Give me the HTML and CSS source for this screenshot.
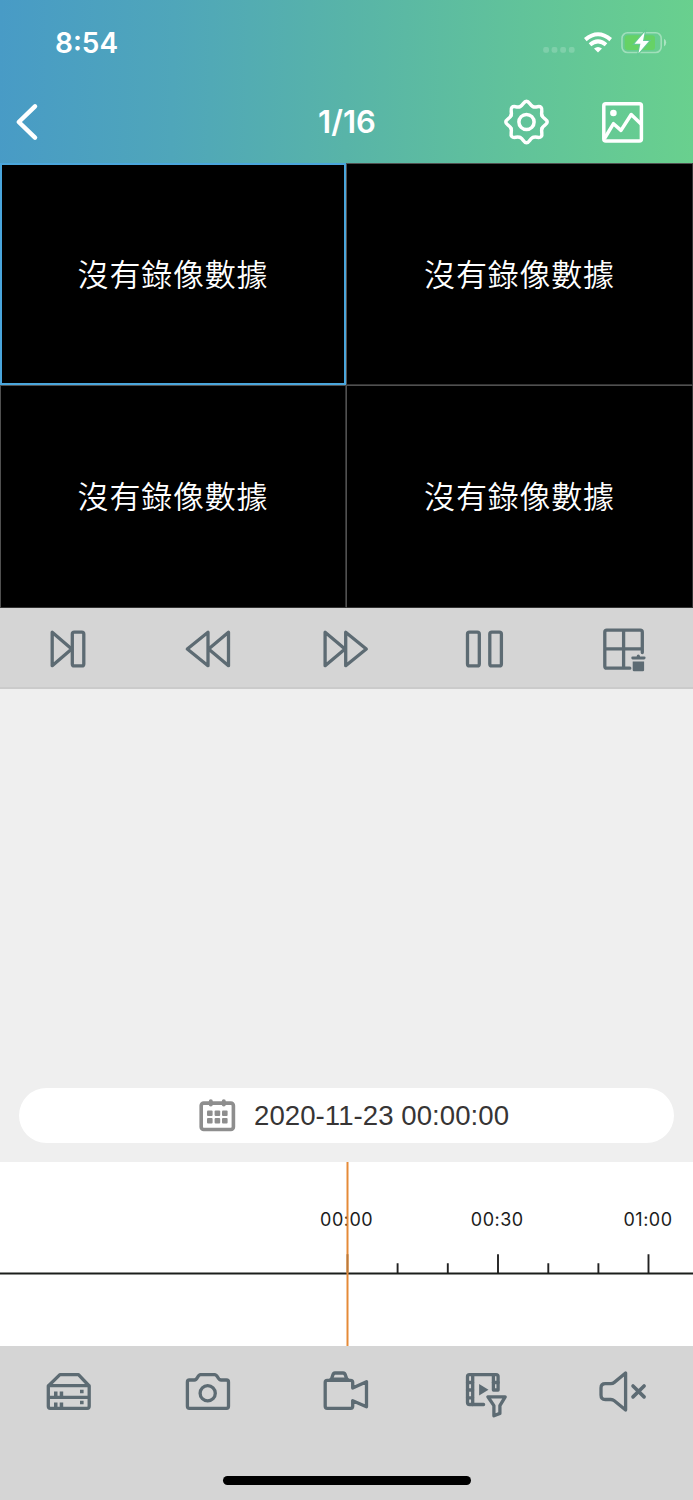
FILE: index.html
```html
<!DOCTYPE html>
<html lang="zh-Hant">
<head>
<meta charset="utf-8">
<title>1/16</title>
<link rel="stylesheet" href="styles.css">
</head>
<body>
<header class="header">
  <div class="status">
    <span class="clock">8:54</span>
    <svg class="status-icons" width="126" height="30" viewBox="541 28 126 30">
      <g fill="#fff" opacity=".18"><rect x="543.2" y="47" width="5.8" height="5.8" rx="2"/><rect x="551.6" y="47" width="5.8" height="5.8" rx="2"/><rect x="560.2" y="47" width="5.8" height="5.8" rx="2"/><rect x="568.8" y="47" width="5.8" height="5.8" rx="2"/></g>
      <g fill="none" stroke="#fff" stroke-width="4"><path d="M585.3 39.6Q598 28.9 610.7 39.6"/><path d="M590 44.7Q598 38.1 606 44.7"/></g>
      <path d="M594 48.6Q598 45.3 602 48.6L598 52.6Z" fill="#fff"/>
      <rect x="622" y="32.7" width="39.2" height="19.8" rx="5.5" fill="none" stroke="#fff" stroke-opacity=".38" stroke-width="1.6"/>
      <path d="M664 38.8Q666.2 40 666.2 42.6T664 46.4Z" fill="#fff" opacity=".45"/>
      <rect x="624.7" y="35.3" width="30.3" height="14.8" rx="3" fill="#66d266"/>
      <path d="M644.7 32L634.5 43.8H640.4L638.5 53.2L649 41H643Z" fill="#fff" stroke="#65c994" stroke-width="2.2" paint-order="stroke"/>
    </svg>
  </div>
  <nav class="nav">
    <svg width="30" height="46" viewBox="12 99 30 46"><path d="M35 106.4L18.8 122L35 137.6" fill="none" stroke="#fff" stroke-width="4.5" stroke-linecap="round" stroke-linejoin="round"/></svg>
    <h1 class="title">1/16</h1>
    <div class="actions">
      <svg width="50" height="50" viewBox="-24.5 -25 50 50" fill="none" stroke="#fff" stroke-width="3.5" stroke-linecap="round">
        <defs><path id="tooth" d="M-6.4 -15.5C-3 -16.9 -3 -20.7 0 -20.7S3 -16.9 6.4 -15.5"/></defs>
        <use href="#tooth"/><use href="#tooth" transform="rotate(45)"/><use href="#tooth" transform="rotate(90)"/><use href="#tooth" transform="rotate(135)"/><use href="#tooth" transform="rotate(180)"/><use href="#tooth" transform="rotate(225)"/><use href="#tooth" transform="rotate(270)"/><use href="#tooth" transform="rotate(315)"/>
        <circle r="7.6"/>
      </svg>
      <svg width="50" height="50" viewBox="598 97 50 50" fill="none" stroke="#fff" stroke-width="3.5" stroke-linejoin="round"><rect x="603.8" y="103.7" width="37.6" height="37.4" rx="2"/><path d="M604.5 138.5L613.5 123.7L621 130.4L631.2 114.5L641 124"/><circle cx="613.4" cy="113" r="3.3" fill="#fff" stroke="none"/></svg>
    </div>
  </nav>
</header>

<main class="grid">
  <div class="cell active">沒有錄像數據</div>
  <div class="cell">沒有錄像數據</div>
  <div class="cell">沒有錄像數據</div>
  <div class="cell">沒有錄像數據</div>
</main>

<div class="bar controls">
  <svg class="icon" viewBox="44.3 621.5 50 54"><path d="M52.5 631.8V665.2L72 648.5Z"/><rect x="72.6" y="631.6" width="11.5" height="33.8" rx="2"/></svg>
  <svg class="icon" viewBox="182.9 621.5 50 54"><path d="M207.9 631.8V665.2L187.2 648.5ZM228.4 631.8V665.2L208.5 648.5Z"/></svg>
  <svg class="icon" viewBox="321.5 621.5 50 54"><path d="M325.6 631.8V665.2L345.5 648.5ZM346.2 631.8V665.2L366.8 648.5Z"/></svg>
  <svg class="icon" viewBox="460.1 621.5 50 54"><rect x="467.6" y="631.6" width="11.8" height="33.8" rx="2"/><rect x="489.9" y="631.6" width="11.6" height="33.8" rx="2"/></svg>
  <svg class="icon" viewBox="598.7 621.5 50 54"><path d="M642 652V631.6Q642 629.6 640 629.6H606.5Q604.5 629.6 604.5 631.6V665.7Q604.5 667.7 606.5 667.7H629.5M604.5 648.4H642M623.3 629.6V667.7"/><path class="solid" d="M631 657.3Q631 656 632.3 656H636.3Q636.5 654 638 654T639.8 656H644Q645.3 656 645.3 657.3T644 658.9H632.3Q631 658.9 631 657.3ZM632.4 661H643.8V669.5Q643.8 670.8 642.5 670.8H633.7Q632.4 670.8 632.4 669.5Z"/></svg>
</div>

<section class="picker">
  <div class="pill">
    <svg width="38" height="34" viewBox="198 1098.5 38 34"><rect x="201.2" y="1102.6" width="32.2" height="26.4" rx="2.5" fill="none" stroke="#8e8e8e" stroke-width="3.6"/><path d="M210.8 1100.8V1104M223.8 1100.8V1104" stroke="#8e8e8e" stroke-width="4" stroke-linecap="round"/><g fill="#8e8e8e"><rect x="207" y="1110" width="5.6" height="5.6" rx="1"/><rect x="214.6" y="1110" width="5.6" height="5.6" rx="1"/><rect x="222" y="1110" width="5.6" height="5.6" rx="1"/><rect x="207" y="1117.4" width="5.6" height="5.6" rx="1"/><rect x="214.6" y="1117.4" width="5.6" height="5.6" rx="1"/><rect x="222" y="1117.4" width="5.6" height="5.6" rx="1"/></g></svg>
    <span class="date">2020-11-23 00:00:00</span>
  </div>
</section>

<svg class="timeline" viewBox="0 1162 693 184">
  <g class="hours"><text x="346.6" y="1225.8">00:00</text><text x="497.3" y="1225.8">00:30</text><text x="648" y="1225.8">01:00</text></g>
  <path d="M397.6 1263.3V1273M447.8 1263.3V1273M498 1254.2V1273M548.3 1263.3V1273M598.4 1263.3V1273M648.5 1254.2V1273" stroke="#222" stroke-width="1.9"/>
  <path d="M0 1273.5H693" stroke="#1b1e1b" stroke-width="2"/>
  <path d="M347.5 1162V1346" stroke="#e58a38" stroke-width="2"/>
  <path d="M347.5 1254.2V1272.5" stroke="#bd7a3a" stroke-width="2"/>
</svg>

<footer class="bar footer">
  <svg class="icon" viewBox="44.3 1366 50 54"><path d="M48.6 1386L60.2 1374.6H78.8L89.5 1386V1406.3Q89.5 1408.3 87.5 1408.3H50.6Q48.6 1408.3 48.6 1406.3ZM48.6 1385.7H89.5M48.6 1397.3H89.5"/><path class="solid" d="M54.3 1391.5h3.5v4.5h-3.5zM60 1391.5h3.5v4.5h-3.5zM54.3 1402.4h3.5v4.5h-3.5zM60 1402.4h3.5v4.5h-3.5zM80.3 1389.7h3.6v3.6h-3.6zM80.3 1400.7h3.6v3.6h-3.6z"/></svg>
  <svg class="icon" viewBox="182.9 1366 50 54"><path d="M189.3 1380H194.3C198 1380 197 1374.6 200.5 1374.6H214.5C218 1374.6 217.3 1380 221 1380H226.4Q228.4 1380 228.4 1382V1406.3Q228.4 1408.3 226.4 1408.3H189.3Q187.3 1408.3 187.3 1406.3V1382Q187.3 1380 189.3 1380Z"/><circle cx="207.6" cy="1393.2" r="7.6"/></svg>
  <svg class="icon" viewBox="321.5 1366 50 54"><path d="M327.7 1380.3H351Q353.2 1380.3 353.2 1382.3V1388L367 1381.8V1406.8L353.2 1400.7V1406.3Q353.2 1408.3 351.2 1408.3H327.7Q325.7 1408.3 325.7 1406.3V1382.3Q325.7 1380.3 327.7 1380.3ZM330.5 1380C334 1378.5 332 1373 335.5 1373H343.5C347.5 1373 345 1378.5 349 1380M333 1379.2H346.5"/></svg>
  <svg class="icon" viewBox="460.1 1366 50 54"><path d="M483.7 1404.5H469.6Q467.6 1404.5 467.6 1402.5V1376.6Q467.6 1374.6 469.6 1374.6H496.2Q498.2 1374.6 498.2 1376.6V1390H493.5V1374.6"/><path d="M472.8 1374.6V1404.5M467.6 1382.5H473M467.6 1390H473M467.6 1397.8H473M493.5 1382.5H498.2"/><path class="solid" d="M479.2 1384L488.6 1389.8L479.2 1395.4Z"/><path d="M488 1396.8H505.3L500 1405.6V1413.4L494 1415.8V1405.6Z"/></svg>
  <svg class="icon" viewBox="598.7 1366 50 54"><path d="M625.3 1373V1410L614 1400.8Q612.5 1399.6 610.5 1399.5H605Q600.7 1399.5 600.7 1395V1388Q600.7 1383.7 605 1383.7H610.5Q612.5 1383.6 614 1382.4Z"/><path d="M632.7 1386L643.8 1396.9M643.8 1386L632.7 1396.9" stroke-width="3.6"/></svg>
  <div class="home"></div>
</footer>
</body>
</html>
```
FILE: styles.css
```css
* { box-sizing: border-box; }
body {
  margin: 0;
  width: 693px;
  height: 1500px;
  display: flex;
  flex-direction: column;
  background: #efefef;
  font-family: Inter, "Noto Sans CJK TC", sans-serif;
  overflow: hidden;
}
svg { display: block; flex: none; }
.header {
  height: 163px;
  color: #fff;
  background: linear-gradient(91deg, #489bc6 0%, #4fa6ba 25%, #58b4a8 50%, #61c39a 75%, #69d08e 100%);
}
.status {
  height: 81px;
  padding: 5px 26px 0 55px;
  display: flex;
  align-items: center;
  justify-content: space-between;
}
.clock { font-size: 28px; font-weight: 560; line-height: 34px; }
.nav {
  height: 82px;
  padding: 0 45px 0 12px;
  display: grid;
  grid-template-columns: 240px 190px 1fr;
  align-items: center;
}
.title { margin: 0; text-align: center; font-size: 31px; font-weight: 560; line-height: 36px; }
.actions { display: flex; justify-content: flex-end; gap: 46px; }
.grid {
  height: 445px;
  display: grid;
  grid-template-columns: 346px 347px;
  grid-template-rows: 222px 223px;
  background: #000;
}
.cell {
  display: flex;
  align-items: center;
  justify-content: center;
  padding-bottom: 3px;
  border: 1px solid #505050;
  border-right-color: #333;
  border-bottom-color: #333;
  color: #fff;
  font: 350 31px/44px "Noto Sans CJK TC", sans-serif;
  letter-spacing: 0.8px;
}
.active { border: 2px solid #4aa6dc; }
.bar {
  display: grid;
  grid-template-columns: repeat(5, 1fr);
  justify-items: center;
  background: #d5d5d5;
}
.controls { height: 81px; align-items: center; border-bottom: 2px solid #cbcbcb; padding-top: 2px; }
.icon {
  width: 50px;
  height: 54px;
  fill: none;
  stroke: #5d6b73;
  stroke-width: 3.3;
  stroke-linejoin: round;
  stroke-linecap: round;
}
.solid { fill: #5d6b73; stroke: none; }
.picker { height: 473px; padding: 0 19px 19px; display: flex; align-items: flex-end; }
.pill {
  width: 655px;
  height: 55px;
  padding-left: 179px;
  display: flex;
  align-items: center;
  gap: 18px;
  border-radius: 28px;
  background: #fff;
}
.date { color: #373535; font: 27.6px/32px "Liberation Sans", Arial, sans-serif; letter-spacing: 0.05px; white-space: nowrap; }
.timeline { width: 693px; height: 184px; background: #fff; }
.hours { font-size: 18px; letter-spacing: 0.5px; text-anchor: middle; fill: #1c1c1c; }
.footer { height: 154px; padding-top: 20px; grid-template-rows: 110px 9px; align-items: start; }
.home { grid-column: 1 / -1; width: 248px; height: 9px; border-radius: 5px; background: #000; }
```
